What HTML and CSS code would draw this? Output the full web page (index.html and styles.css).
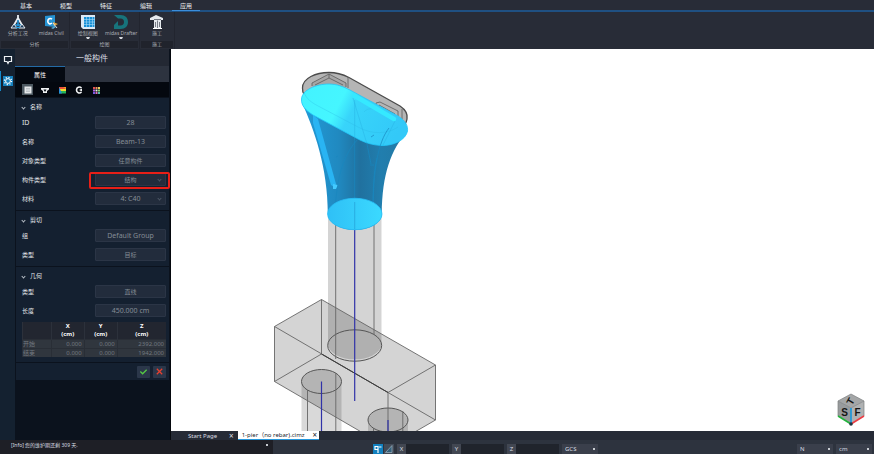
FILE: index.html
```html
<!DOCTYPE html>
<html lang="zh-CN">
<head>
<meta charset="utf-8">
<title>midas CIM</title>
<link rel="stylesheet" href="styles.css">
</head>
<body>
<nav class="menu">
  <a href="#">基本</a><a href="#">模型</a><a href="#">特征</a><a href="#">编辑</a><a href="#" class="current">应用</a>
</nav>
<header class="ribbon">
  <section class="group">
    <div class="tools">
      <button class="tool">
        <svg viewBox="0 0 16 16"><path d="M8 1v4M8 4L4 11M8 4l4 7" stroke="#e8edf2" stroke-width="1.8" fill="none"/><path d="M8 6v6M4 11h8" stroke="#2196dd" stroke-width="1.500"/><path d="M1 14l3-4 3 4zM9 14l3-4 3 4z" fill="#183b5c" stroke="#e8edf2"/><path d="M6 13.500h4" stroke="#2ba4e8" stroke-width="1.500"/></svg>
        <span>分析工况</span>
      </button>
      <button class="tool">
        <svg viewBox="0 0 16 16"><path d="M2 2l10-1v12l-10-1z" fill="#2593d3"/><path d="M9 5.200C7 3.500 4.800 5 4.800 7.200c0 2.600 2.400 3.400 4.200 1.800" fill="none" stroke="#fff" stroke-width="1.600"/><path d="M10 8l5 2-4 2z" fill="#e2a63b"/><path d="M8 14l4-2 1 1-3 2z" fill="#55a9d1"/><path d="M10 9l4 5" stroke="#d8dde2"/></svg>
        <span>midas Civil</span>
      </button>
    </div>
    <h2>分析</h2>
  </section>
  <section class="group">
    <div class="tools">
      <button class="tool drop">
        <svg viewBox="0 0 16 16"><path d="M1 1h14v14H3L1 13z" fill="#dbe9f4"/><path d="M4 3h10.500v10H4z" fill="#168fd6"/><path d="M6.500 3v10M9.500 3v10M12.500 3v10M4 5.500h11M4 8h11M4 10.500h11" stroke="#a8dcf8" stroke-width=".6"/></svg>
        <span>绘制视图</span>
      </button>
      <button class="tool drop">
        <svg viewBox="0 0 16 16"><path fill-rule="evenodd" d="M1 1h6.500C12.500 1 15 4 15 8s-2.500 7-7.500 7H1v-4l4-4V4.500L1 1zM5 4.500v7h2.500c2.300 0 3.500-1.300 3.500-3.500S9.800 4.500 7.500 4.500z" fill="#17747c"/></svg>
        <span>midas Drafter</span>
      </button>
    </div>
    <h2>绘图</h2>
  </section>
  <section class="group small">
    <div class="tools">
      <button class="tool">
        <svg viewBox="0 0 16 16"><path d="M1 6V4l6-3 7 3v2h-2v8H5V6z" fill="#e5e9ed"/><path d="M5 5.500h7M8.500 6.500V14M6.500 8v5M10.500 8v5" stroke="#5a606b" stroke-width=".8"/><path d="M4 14.500h9" stroke="#fff"/></svg>
        <span>施工</span>
      </button>
    </div>
    <h2>施工</h2>
  </section>
</header>

<main class="work">
  <nav class="rail">
    <button aria-label="视图"><svg viewBox="0 0 10 10"><path d="M1.500 1.500h7v5H6L5 8.500 4 6.500H1.500z" fill="none" stroke="#eef2f5" stroke-width="1.200"/></svg></button>
    <button aria-label="设置" class="on"><svg viewBox="0 0 10 10"><circle cx="5" cy="5" r="2.400" fill="none" stroke="#fff"/><circle cx="5" cy="5" r="3.600" fill="none" stroke="#fff" stroke-width="1.200" stroke-dasharray="1.200 1.627"/></svg></button>
  </nav>
  <aside class="panel">
    <h1>一般构件</h1>
    <div class="tabs"><button class="active">属性</button></div>
    <div class="modes">
      <button class="picked" aria-label="常规"><svg viewBox="0 0 10 10"><path d="M1.500 1.500h7v7h-7z" fill="#e4e7e9"/><path d="M3 3.500h4M3 5h4M3 6.500h4" stroke="#aeb5ba" stroke-width=".7"/></svg></button>
      <button aria-label="截面"><svg viewBox="0 0 10 10"><path d="M1 3h8v1.500L7 6v2H3V6L1 4.500z" fill="#eef0f2"/><path d="M3.500 4.500h3L5.500 6.500h-1z" fill="#0a1019"/></svg></button>
      <button aria-label="显示"><svg viewBox="0 0 10 10"><path d="M2 2h7v2H2z" fill="#eb4f38"/><path d="M2 4h7v2H2z" fill="#f0dd32"/><path d="M2 6h7v2.500H2z" fill="#28b55c"/><path d="M2 2l3 6.500H2z" fill="#268bda"/><path d="M6 2h3v2z" fill="#f39c2b"/></svg></button>
      <button aria-label="刷新"><svg viewBox="0 0 10 10"><path d="M7.500 3C5.500 1 2.500 2.400 2.500 5s3 4 5 2" fill="none" stroke="#f3f5f6" stroke-width="1.600"/><path d="M5 5l3-1.500v3z" fill="#f3f5f6"/></svg></button>
      <button aria-label="网格"><svg viewBox="0 0 10 10"><path d="M2 2h2v2H2z" fill="#e45252"/><path d="M4.500 2h2v2h-2z" fill="#ef8d5e"/><path d="M7 2h2v2H7z" fill="#e8d164"/><path d="M2 4.500h2v2H2z" fill="#b765df"/><path d="M4.500 4.500h2v2h-2z" fill="#eee"/><path d="M7 4.500h2v2H7z" fill="#8cd26b"/><path d="M2 7h2v2H2z" fill="#755de2"/><path d="M4.500 7h2v2h-2z" fill="#dc71c0"/><path d="M7 7h2v2H7z" fill="#57b7a9"/></svg></button>
    </div>
    <section class="block">
      <h3>名称</h3>
      <div class="row"><label for="id" class="latin">ID</label><input id="id" value="28" readonly></div>
      <div class="row"><label for="name">名称</label><input id="name" value="Beam-13" readonly></div>
      <div class="row"><label for="object">对象类型</label><input id="object" class="han" value="任意构件" readonly></div>
      <div class="row"><label for="member">构件类型</label><span class="pick marked"><select id="member" class="han"><option>结构</option></select></span></div>
      <div class="row"><label for="material">材料</label><span class="pick"><select id="material"><option>4: C40</option></select></span></div>
    </section>
    <section class="block">
      <h3>剪切</h3>
      <div class="row"><label for="set">组</label><input id="set" value="Default Group" readonly></div>
      <div class="row"><label for="cut">类型</label><input id="cut" class="han" value="目标" readonly></div>
    </section>
    <section class="block">
      <h3>几何</h3>
      <div class="row"><label for="curve">类型</label><input id="curve" class="han" value="直线" readonly></div>
      <div class="row"><label for="length">长度</label><input id="length" value="450.000 cm" readonly></div>
      <table>
        <colgroup><col class="c1"><col class="c2"><col class="c3"><col class="c4"></colgroup>
        <thead><tr><th></th><th>X<br>(cm)</th><th>Y<br>(cm)</th><th>Z<br>(cm)</th></tr></thead>
        <tbody>
          <tr><th>开始</th><td>0.000</td><td>0.000</td><td>2392.000</td></tr>
          <tr><th>结束</th><td>0.000</td><td>0.000</td><td>1942.000</td></tr>
        </tbody>
      </table>
    </section>
    <div class="confirm">
      <button aria-label="确定"><svg viewBox="0 0 10 10"><path d="M1.500 5l2.500 2.500L8.500 3" fill="none" stroke="#55c943" stroke-width="1.400"/></svg></button>
      <button aria-label="取消"><svg viewBox="0 0 10 10"><path d="M2 2l6 6M8 2L2 8" stroke="#e8402e" stroke-width="1.400"/></svg></button>
    </div>
  </aside>
  <div class="stage">
    <div class="canvas">
      <svg class="model" viewBox="171 49 703 382" preserveAspectRatio="xMinYMin slice">
        <defs>
          <linearGradient id="body" x1="0" x2="1"><stop offset="0" stop-color="#229bd8"/><stop offset=".35" stop-color="#2089c0"/><stop offset=".55" stop-color="#20719f"/><stop offset=".75" stop-color="#217eae"/><stop offset="1" stop-color="#2378a3"/></linearGradient>
          <linearGradient id="cap" x1="0" x2="1" y1=".2" y2=".5"><stop offset="0" stop-color="#43f3ff"/><stop offset=".36" stop-color="#45f6ff"/><stop offset=".5" stop-color="#38d4fa"/><stop offset="1" stop-color="#33c9f8"/></linearGradient>
          <linearGradient id="base" x1="0" x2="1"><stop offset="0" stop-color="#2fc0f6"/><stop offset="1" stop-color="#3bd9ff"/></linearGradient>
        </defs>
        <!-- piles -->
        <path d="M301.500 381.500V431h40v-49.500a20 12 0 0 0-40 0zM368 420v11h40v-11a20 12 0 0 0-40 0z" fill="#000" fill-opacity=".15"/>
        <!-- column -->
        <path d="M328 214v131.500a27 16 0 0 0 53.500 0V214z" fill="#000" fill-opacity=".17"/>
        <!-- footing -->
        <path d="M321.500 299.500L435.500 365v55L388 447.500 274.500 381.500v-55z" fill="#000" fill-opacity=".17"/>
        <ellipse cx="354.700" cy="345.500" rx="27" ry="15.700" fill="none" stroke="#555"/>
        <ellipse cx="321.500" cy="381.500" rx="20" ry="12" fill="none" stroke="#555"/>
        <ellipse cx="388" cy="420" rx="20" ry="12" fill="none" stroke="#555"/>
        <g fill="none" stroke="#666" stroke-width=".9">
          <path d="M321.500 299.500L435.500 365v55L388 447.500 274.500 381.500v-55z"/>
          <path d="M274.500 326.500L388 392.500v55M388 392.500l47.500-27.500M321.500 299.500v54.500l114 66M321.500 354l-47 27.500"/>
          <path d="M335.700 214v145M374 214v121M307.500 390v41M335.800 373v58M373.500 428v3M402.800 411v20"/>
        </g>
        <path d="M321.500 354L388 392.500" stroke="#3c3c3c"/>
        <path d="M354.700 229v172M321.500 381.500V431M388 420v11" stroke="#3032a8" stroke-width="1.200"/>
        <!-- upper cap -->
        <path d="M302.500 88C302.500 78 316 72.500 329 72.500c8 0 14 2 20 5L400 106c6 4 8 8 7 13-1 9-13 15-26 14-8 0-15-2-21-5L313 103c-7-4-11-9-10.500-15z" fill="#b5b5b5" stroke="#4b4b4b" stroke-width="1.300"/>
        <path d="M312 86V83l17-9 17 9v5l-17 9z" fill="#a6a6a6"/>
        <path d="M312 86V83l17-9 17 9v4M329 74v4l-14 7M329 78l14 7M348 77v11M376 107v-4l4-1 18 9v5M379 108v-3l16 9M402 109v10" fill="none" stroke="#5c5c5c" stroke-width=".8"/>
        <!-- selected pier head -->
        <path d="M302 103c12 26 26 65 25.800 111a27 16 0 0 0 54 0c.4-40 9-64 25.700-83L360 100z" fill="url(#body)"/>
        <path d="M313 115l5 4 18 65-2 3-3-2-18-62z" fill="#29b4f3"/>
        <path d="M333 184l5 1-2 4h-3z" fill="#43caff"/>
        <path d="M301.500 99C302 90 316 84 329 84c8 0 15 3 21 6l48 26c8 5 10 10 9.500 15-1.500 9-14.500 15-26.500 14.500-8-.5-15-2.500-21-5.500l-47-25c-8-5-12-10-11.500-16z" fill="url(#cap)" stroke="#22c8fa" stroke-width=".8"/>
        <path d="M304 92c2 7 8 11 16 15l38 20c14 8 30 7 40 0M364 112c4-5 12-4 18 1l8 6" fill="none" stroke="#28b4e2" stroke-width=".5" opacity=".6"/>
        <path d="M354 95.500L394 119" stroke="#35e9ff" stroke-width="4.500" stroke-linecap="round"/>
        <path d="M353 98l14 46M354.700 100v40M395 121l-12 24" fill="none" stroke="#22a8dc" stroke-width=".5" opacity=".7"/>
        <path d="M367 144l4 20M354.700 140v61M358 139c-13 13-19 34-21 51l-3 24M389 128c-11 14-16 42-16 86M377 158c-4 15-4 40-4 55M336 157l2-1M371 137l3-2M370 165h4" fill="none" stroke="#1887be" stroke-width=".7"/>
        <ellipse cx="354.800" cy="214" rx="27.200" ry="15.700" fill="url(#base)" stroke="#28bff7" stroke-width=".8"/>
        <path d="M354.700 202v27" stroke="#249fd5" stroke-width=".7"/>
      </svg>
      <svg class="cube" viewBox="0 0 30 34">
        <path d="M15 1l13 7-13 7L2 8z" fill="#a4a6a7"/><path d="M2 8l13 7v16L2 23z" fill="#989b9d"/><path d="M28 8l-13 7v16l13-8z" fill="#b0b2b3"/>
        <path d="M2 8l13 7 13-7M2 8l13-7 13 7v15M2 8v15" fill="none" stroke="#7b7e80" stroke-width=".7"/>
        <path d="M2 23l13 8" stroke="#22b33b" stroke-width="1.600"/><path d="M28 23l-13 8" stroke="#ed3c43" stroke-width="1.600"/><path d="M15 15v15" stroke="#2499d8" stroke-width="1.800"/><circle cx="15" cy="31" r="1.800" fill="#1e3440"/>
        <text x="8.500" y="23" class="face">S</text><text x="21.500" y="23" class="face">F</text><text transform="translate(14 8) rotate(-60)" x="0" y="4" class="face">T</text>
      </svg>
    </div>
    <div class="files">
      <button>Start Page<i>×</i></button><button class="active">1-pier（no rebar).cimz<i>×</i></button>
    </div>
  </div>
</main>

<footer class="bottom">
  <div class="info"><span>[Info] 您的维护期还剩 309 天.</span><i class="dot"></i></div>
  <div class="status">
    <div class="coords">
      <button class="snap on" aria-label="捕捉"><svg viewBox="0 0 10 10"><path d="M2 2.500h3v3H2zM6 3h2.500M5 5v4" stroke="#fff" stroke-width="1.200" fill="none"/></svg></button>
      <button class="snap" aria-label="平面"><svg viewBox="0 0 10 10"><path d="M1.500 8.500L8 1.500v7z" fill="#35607b" stroke="#9fb5c2" stroke-width=".7"/></svg></button>
      <div class="axis"><label for="px">X</label><input id="px"></div>
      <div class="axis"><label for="py">Y</label><input id="py"></div>
      <div class="axis"><label for="pz">Z</label><input id="pz"></div>
      <span class="unit"><select aria-label="坐标系"><option>GCS</option></select></span>
    </div>
    <div class="units">
      <span class="unit"><select aria-label="力"><option>N</option></select></span>
      <span class="unit"><select aria-label="长度单位"><option>cm</option></select></span>
    </div>
  </div>
</footer>
</body>
</html>
```
FILE: styles.css
```css
*, *::before, *::after { box-sizing: border-box; }
body {
  margin: 0;
  min-height: 100vh;
  display: flex;
  flex-direction: column;
  background: #282c37;
  color: #d9dde2;
  font: 6px/8px "Noto Sans", "Noto Sans CJK SC", sans-serif;
}
button, input, select {
  margin: 0;
  padding: 0;
  border: 0;
  border-radius: 0;
  background: none;
  color: inherit;
  font: inherit;
  appearance: none;
}
h1, h2, h3 { margin: 0; font-weight: 400; }
i { font-style: normal; }
svg { display: block; }

/* menu and ribbon */
.menu {
  display: flex;
  height: 12px;
  padding-left: 6px;
  border-bottom: 2px solid #1f5082;
}
.menu a {
  width: 40px;
  line-height: 12px;
  text-align: center;
  color: #f0f2f4;
  text-decoration: none;
}
.menu .current {
  height: 11px;
  margin: 0 6px;
  width: 28px;
  border-bottom: 1px solid #3b8edb;
}
.ribbon { display: flex; height: 37px; }
.group {
  width: 70px;
  padding: 2px 1px 1px;
  display: flex;
  flex-direction: column;
  justify-content: space-between;
  border-right: 1px solid #22252f;
}
.group.small { width: 35px; }
.tools { display: flex; }
.tool {
  flex: 1 0 0;
  display: flex;
  flex-direction: column;
  align-items: center;
  font-size: 5px;
  line-height: 7px;
  color: #a9adb4;
  white-space: nowrap;
}
.tool svg { width: 16px; height: 16px; }
.drop::after {
  content: "";
  width: 4px;
  height: 2px;
  border: 1px solid transparent;
  border-top: 2px solid #d5d9de;
}
.group h2 {
  height: 7px;
  font-size: 5px;
  line-height: 7px;
  text-align: center;
  background: #20232c;
  color: #a9adb4;
}

/* left side */
.work { flex: 1; display: flex; }
.rail { width: 15px; padding-top: 1px; background: #142130; }
.rail button {
  width: 15px;
  height: 20px;
  margin-bottom: 1px;
  display: grid;
  place-items: center;
  border-left: 1px solid transparent;
}
.rail svg { width: 10px; height: 10px; }
.rail .on { border-color: #1688c9; }
.rail .on svg { background: #1681be; }
.panel {
  width: 156px;
  padding: 0 1px 0 0;
  background: #0b121d;
  border-right: 1px solid #05080d;
}
.panel h1 {
  height: 17px;
  font-size: 8px;
  line-height: 17px;
  text-align: center;
  background: #232833;
}
.tabs { height: 16px; background: #2d333f; }
.tabs button {
  width: 50px;
  height: 16px;
  border-top: 1px solid #246ba6;
  background: #050a12;
  color: #fff;
}
.modes {
  height: 15px;
  display: flex;
  align-items: center;
  gap: 6px;
  padding-left: 7px;
  margin-bottom: 1px;
  background: #04080f;
}
.modes button { width: 11px; height: 11px; display: grid; place-items: center; }
.modes svg { width: 10px; height: 10px; }
.modes .picked { background: #4d5961; }
.block {
  margin: 0 0 1px 1px;
  padding: 4px 3px 5px 6px;
  background: #142030;
}
.block h3 {
  height: 10px;
  margin-bottom: 4px;
  display: flex;
  align-items: center;
  gap: 5px;
  font-size: 6px;
  color: #e3e6e9;
}
.block h3::before {
  content: "";
  width: 3px;
  height: 3px;
  border: solid #b7bec6;
  border-width: 0 1px 1px 0;
  transform: rotate(45deg);
}
.row {
  height: 13px;
  display: flex;
  align-items: center;
  justify-content: space-between;
  color: #e3e6e9;
}
.row .latin { font-size: 7px; }
.row + .row { margin-top: 6px; }
.row input, .row select {
  width: 71px;
  height: 13px;
  display: block;
  border: 1px solid #2b3546;
  border-radius: 1px;
  background: #222c3c;
  color: #858c96;
  font-size: 7px;
  text-align: center;
  text-align-last: center;
}
.row .han { font-size: 6px; }
.pick { position: relative; }
.pick::before {
  content: "";
  position: absolute;
  top: 5px;
  right: 5px;
  width: 3px;
  height: 3px;
  border: solid #4c5665;
  border-width: 0 1px 1px 0;
  transform: rotate(45deg);
}
.marked::after {
  content: "";
  position: absolute;
  inset: -1px -4px -3px -6px;
  border: 2px solid #e71f17;
  border-radius: 2px;
  pointer-events: none;
}
table {
  width: 100%;
  margin-top: 5px;
  table-layout: fixed;
  border-collapse: collapse;
  background: #30363e;
}
.c1 { width: 20%; }
.c2, .c3 { width: 23%; }
.c4 { width: 34%; }
th, td {
  height: 9px;
  padding: 0 2px 0 0;
  border-left: 1px solid #292e36;
  line-height: 8px;
  font-weight: 400;
  color: #727980;
  text-align: right;
}
tbody th { padding: 0; text-align: left; }
tbody tr { border-top: 1px solid #292e36; }
thead th {
  height: 17px;
  padding: 0;
  background: #222630;
  border-color: #2c313b;
  color: #fff;
  font-weight: 700;
  text-align: center;
}
.confirm {
  height: 17px;
  margin-left: 1px;
  display: flex;
  align-items: center;
  justify-content: flex-end;
  gap: 3px;
  padding-right: 3px;
  background: #142030;
}
.confirm button {
  width: 13px;
  height: 12px;
  display: grid;
  place-items: center;
  background: #2b374a;
  border-radius: 1px;
}
.confirm svg { width: 9px; height: 9px; }

/* model view */
.stage { flex: 1; min-width: 0; display: flex; flex-direction: column; }
.canvas {
  flex: 1 0 0;
  position: relative;
  overflow: hidden;
  background: #fff;
}
.model { position: absolute; inset: 0; width: 100%; height: 100%; }
.cube {
  position: absolute;
  right: 8px;
  bottom: 4px;
  width: 30px;
  height: 34px;
}
.face {
  font: 700 10px "Liberation Sans", sans-serif;
  text-anchor: middle;
  fill: #151515;
}
.files {
  height: 9px;
  display: flex;
  gap: 2px;
  padding-left: 11px;
  background: #262b36;
}
.files button {
  display: flex;
  align-items: center;
  gap: 8px;
  padding: 0 2px 0 4px;
  line-height: 8px;
  white-space: nowrap;
}
.files button:first-child { gap: 12px; padding-left: 6px; }
.files i { font-size: 8px; line-height: 8px; }
.files .active {
  background: #fff;
  color: #20242b;
  border-bottom: 1px solid #2497dc;
}

/* bottom line */
.bottom { height: 14px; display: flex; background: #2d333e; }
.info {
  width: 273px;
  padding: 0 5px 0 11px;
  display: flex;
  justify-content: space-between;
  background: #1e1f26;
  font-size: 5px;
  line-height: 10px;
}
.dot { width: 2px; height: 2px; margin-top: 4px; background: #c7cbd0; }
.status {
  flex: 1;
  padding: 4px 2px 0 100px;
  display: flex;
  justify-content: space-between;
}
.coords, .units { display: flex; gap: 3px; }
.snap { width: 10px; height: 10px; background: #424a57; }
.snap + .snap { margin-left: -2px; }
.snap svg { width: 10px; height: 10px; }
.snap.on { background: #1180bf; }
.axis { display: flex; height: 10px; }
.axis label {
  width: 9px;
  line-height: 10px;
  text-align: center;
  background: #424752;
}
.axis input { width: 43px; background: #20242c; }
.unit { position: relative; }
.unit select {
  width: 36px;
  height: 10px;
  display: block;
  padding-left: 3px;
  background: #3a3f4b;
  line-height: 10px;
}
.unit::after {
  content: "";
  position: absolute;
  top: 4px;
  right: 3px;
  width: 2px;
  height: 2px;
  background: #c7cbd0;
}
```
